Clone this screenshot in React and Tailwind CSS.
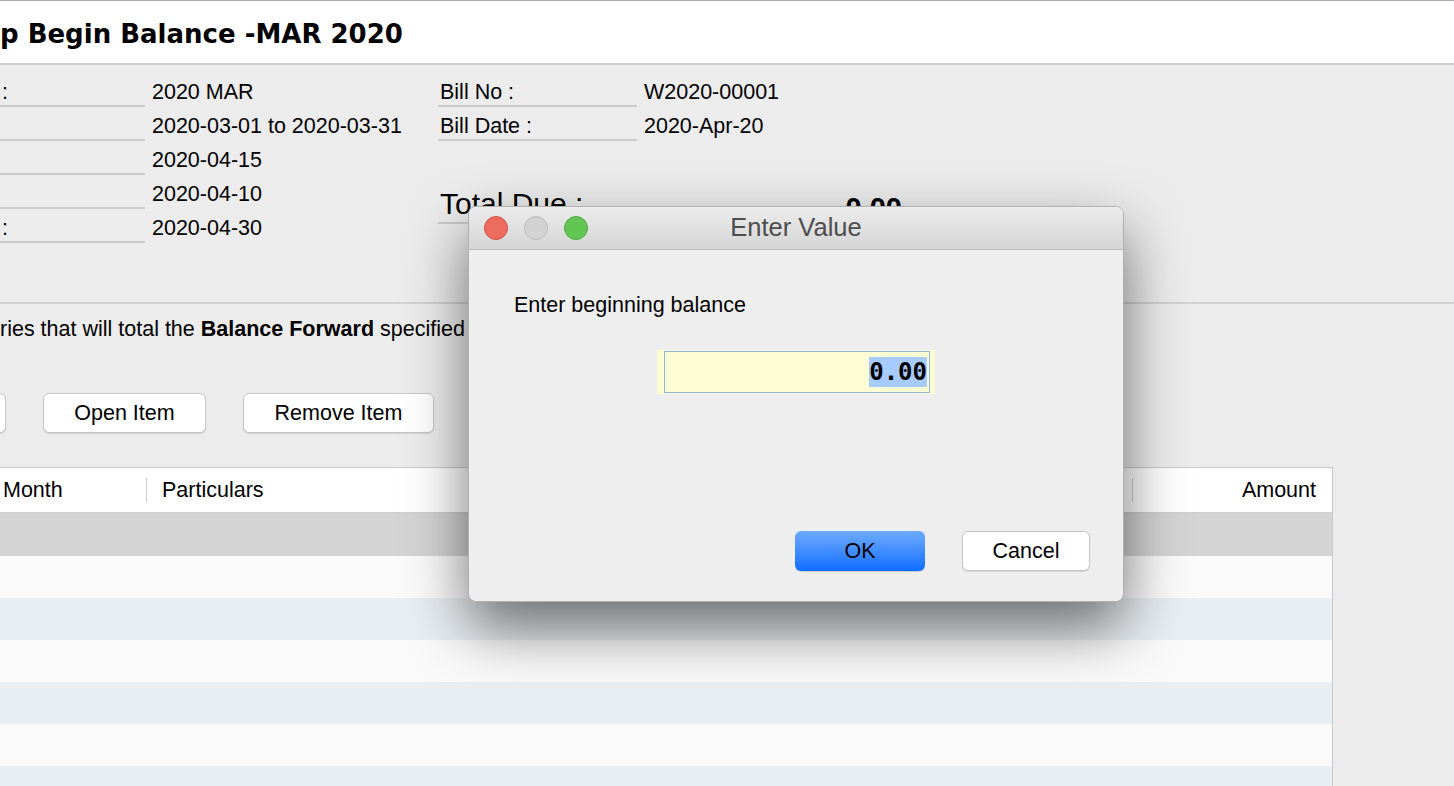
import React from 'react';

const leftRows = [
  { label: ':', value: '2020 MAR' },
  { label: '', value: '2020-03-01 to 2020-03-31' },
  { label: '', value: '2020-04-15' },
  { label: '', value: '2020-04-10' },
  { label: ':', value: '2020-04-30' },
];

const rightRows = [
  { label: 'Bill No :', value: 'W2020-00001' },
  { label: 'Bill Date :', value: '2020-Apr-20' },
];

const rowColors = ['bg-[#d4d4d4]', 'bg-[#fafafa]', 'bg-[#e9eef2]', 'bg-[#fafafa]', 'bg-[#e9eef2]', 'bg-[#fafafa]', 'bg-[#e9eef2]'];

function InfoRow({ label, value, width }) {
  return (
    <div className="flex h-[34px]">
      <div className={`${width} border-b-2 border-[#cbcbcb] pt-[7px] pl-[2px] leading-[24px]`}>{label}</div>
      <div className="pl-[7px] pt-[7px] leading-[24px] whitespace-nowrap">{value}</div>
    </div>
  );
}

function Button({ children, className = '' }) {
  return (
    <button className={`h-[40px] rounded-[6px] border border-[#c6c6c6] bg-white text-[21.5px] text-black shadow-[0_1px_1px_rgba(0,0,0,0.12)] ${className}`}>
      {children}
    </button>
  );
}

export default function App() {
  return (
    <div className="relative w-[1454px] h-[786px] overflow-hidden bg-[#ececec] text-black text-[21.5px] font-['Liberation_Sans',Arial,sans-serif]">
      {/* Header */}
      <div className="h-[65px] bg-white border-t border-[#a9a9a9] border-b-2 border-b-[#cecece] flex items-center">
        <h1 className="font-['DejaVu_Sans',sans-serif] font-bold text-[26px] leading-none whitespace-nowrap mt-[3px]">
          p Begin Balance -MAR 2020
        </h1>
      </div>

      {/* Bill info */}
      <div className="flex h-[239px] pt-[8px] border-b-2 border-[#d2d2d2]">
        <div className="w-[438px]">
          {leftRows.map((r, i) => (
            <InfoRow key={i} label={r.label} value={r.value} width="w-[145px]" />
          ))}
        </div>
        <div>
          {rightRows.map((r, i) => (
            <InfoRow key={i} label={r.label} value={r.value} width="w-[199px]" />
          ))}
          <div className="flex mt-[46px]">
            <div className="w-[199px] h-[37px] border-b-2 border-[#cbcbcb] pl-[2px] text-[30px] leading-[34px]">Total Due :</div>
            <div className="w-[265px] text-right font-bold text-[29px] leading-[34px] pt-[4px]">0.00</div>
          </div>
        </div>
      </div>

      {/* Hint text */}
      <p className="mt-[13px] leading-[24px] whitespace-nowrap">
        ries that will total the <b>Balance Forward</b> specified above.
      </p>

      {/* Actions */}
      <div className="flex gap-[37px] mt-[52px]">
        <Button className="w-[150px] -ml-[144px]" />
        <Button className="w-[163px]">Open Item</Button>
        <Button className="w-[191px]">Remove Item</Button>
      </div>

      {/* Table */}
      <div className="mt-[34px] w-[1333px] border-t border-r border-[#c9c9c9]">
        <div className="h-[46px] bg-white border-b-2 border-[#d0d0d0] flex items-center">
          <div className="w-[147px] pl-[3px] border-r border-[#cfcfcf] h-[24px] leading-[24px]">Month</div>
          <div className="flex-1 pl-[15px] leading-[24px]">Particulars</div>
          <div className="w-[200px] border-l border-[#cfcfcf] h-[24px] leading-[24px] text-right pr-[16px]">Amount</div>
        </div>
        {rowColors.map((c, i) => (
          <div key={i} className={`h-[42px] ${c}`} />
        ))}
      </div>

      {/* Dialog */}
      <div className="absolute left-[468px] top-[206px] w-[656px] h-[396px] rounded-[8px] border border-[#b0b0b0] bg-[#eeeeee] shadow-[0_26px_60px_rgba(0,0,0,0.55)] flex flex-col overflow-hidden">
        <div className="h-[43px] grid grid-cols-[1fr_auto_1fr] items-center border-b border-[#bebebe] bg-gradient-to-b from-[#ececec] to-[#d5d5d5]">
          <div className="flex items-center gap-[16px] pl-[15px]">
            <span className="w-[24px] h-[24px] rounded-full bg-[#ee6b60] border border-[#d25249]" />
            <span className="w-[24px] h-[24px] rounded-full bg-[#d3d3d3] border border-[#bcbcbc]" />
            <span className="w-[24px] h-[24px] rounded-full bg-[#62c554] border border-[#4ea842]" />
          </div>
          <div className="text-[25.5px] text-[#4d4d4d] leading-none">Enter Value</div>
          <div />
        </div>
        <div className="flex-1 flex flex-col pt-[43px] pb-[30px]">
          <div className="pl-[45px] leading-[24px]">Enter beginning balance</div>
          <div className="mt-[33px] self-center pl-[7px] pr-[5px] py-[1px] bg-[#fcfcd3]">
            <div className="w-[266px] h-[42px] border border-[#8fb5d9] bg-[#fcfdd4] flex items-center justify-end pr-[2px]">
              <span className="bg-[#a7cbff] font-['DejaVu_Sans_Mono',monospace] font-bold text-[24px] leading-[30px]">0.00</span>
            </div>
          </div>
          <div className="flex-1" />
          <div className="flex justify-end gap-[37px] pr-[33px]">
            <button className="w-[130px] h-[40px] rounded-[6px] bg-gradient-to-b from-[#6cabff] to-[#0a6bff] text-[21.5px] text-black shadow-[0_1px_1px_rgba(0,0,0,0.15)]">
              OK
            </button>
            <Button className="w-[128px]">Cancel</Button>
          </div>
        </div>
      </div>
    </div>
  );
}
